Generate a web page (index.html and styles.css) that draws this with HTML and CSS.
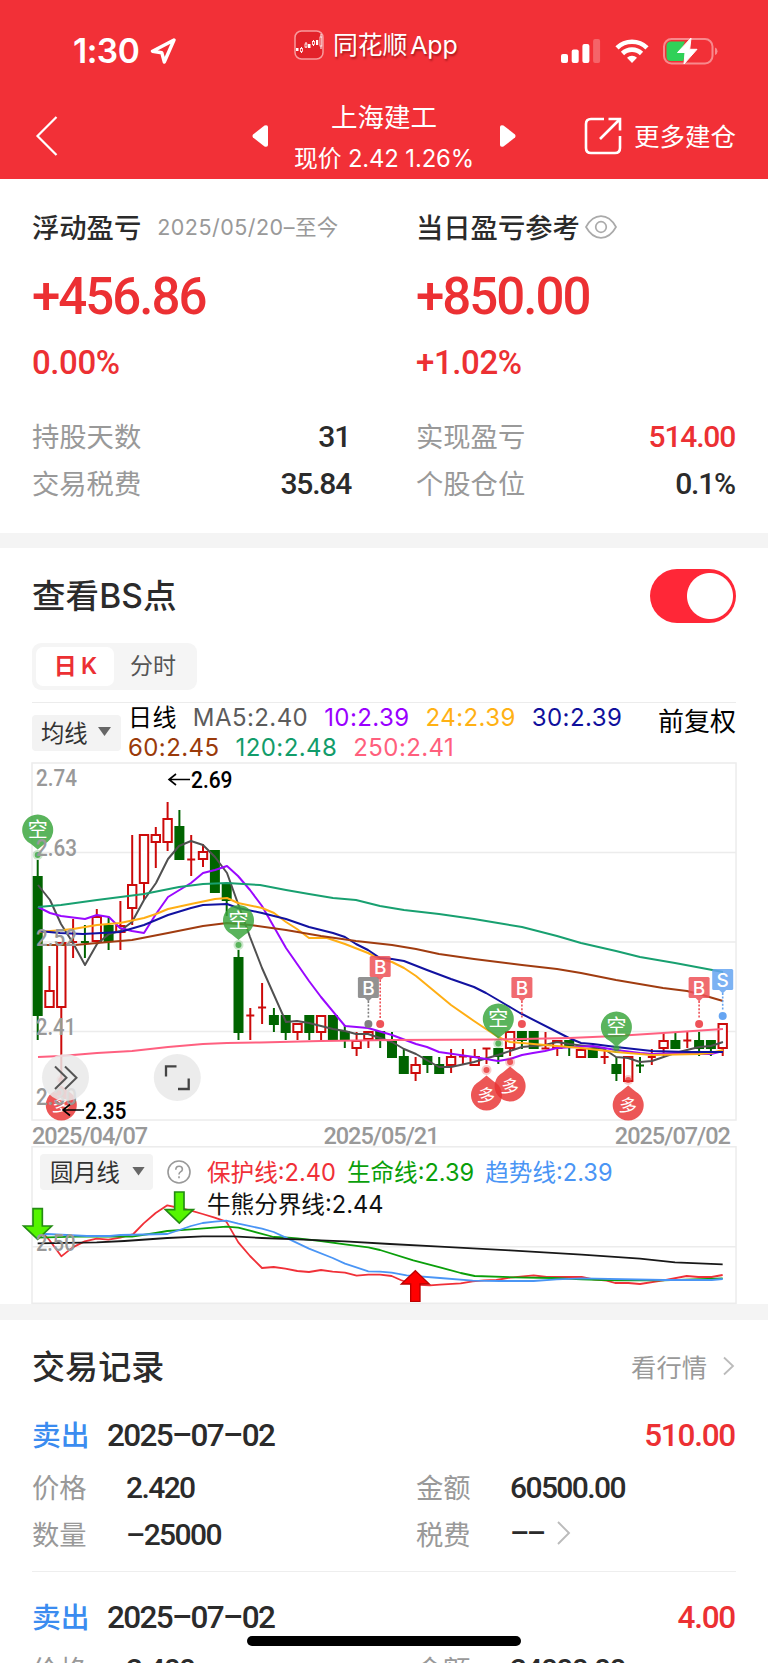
FILE: index.html
```html
<!DOCTYPE html>
<html lang="zh-CN">
<head>
<meta charset="utf-8">
<title>上海建工</title>
<link rel="stylesheet" href="styles.css">
</head>
<body>
<div class="app">
  <header class="top">
    <div class="status">
      <div class="clock"><span>1:30</span>
        <svg width="26" height="26" viewBox="0 0 26 26"><path d="M24 2 2.500 13.200l9.300 1.600L14.300 24z" fill="none" stroke="#fff" stroke-width="3.400" stroke-linejoin="round"/></svg>
      </div>
      <div class="island">
        <svg width="30" height="30" viewBox="0 0 30 30"><rect x="1" y="1" width="28" height="28" rx="6.500" fill="#e3222a" stroke="#f79a9d" stroke-width="1.500"/><g stroke="#fff" stroke-width="1" fill="none"><path d="M7.500 17v6M12 12v6M19.500 10v6M27 4v15"/></g><g fill="#fff"><rect x="2" y="18" width="2.500" height="3"/><rect x="14" y="14" width="2.500" height="4"/><rect x="22" y="10" width="2.200" height="5"/></g><g fill="#e3222a" stroke="#fff" stroke-width=".8"><rect x="6.500" y="18.500" width="2" height="3"/><rect x="11" y="14" width="2" height="3"/><rect x="18.500" y="11.500" width="2" height="3"/><rect x="26" y="7" width="1.800" height="9"/></g></svg>
        <span>同花顺 App</span>
      </div>
      <div class="signals">
        <svg width="40" height="26" viewBox="0 0 40 26" fill="#fff"><rect x="0" y="16" width="7" height="9" rx="2"/><rect x="10.700" y="11.500" width="7" height="13.500" rx="2"/><rect x="21.400" y="6" width="7" height="19" rx="2"/><rect x="32.100" y="1" width="7" height="24" rx="2" opacity=".25"/></svg>
        <svg width="34" height="26" viewBox="0 0 34 26" fill="none" stroke="#fff" stroke-width="4.600"><path d="M2 9.800a21.500 21.500 0 0 1 30 0"/><path d="M7.500 15.500a13.500 13.500 0 0 1 19 0"/><path d="M17 25l-5-5.200a7.200 7.200 0 0 1 10 0z" fill="#fff" stroke="none"/></svg>
        <svg width="56" height="28" viewBox="0 0 56 28"><rect x="1" y="2" width="48.500" height="24.500" rx="7.500" fill="none" stroke="#f8898d" stroke-width="2"/><path d="M52 10.500q2.500.8 2.500 3.700t-2.500 3.700z" fill="#f8898d"/><path d="M8 4.500h14L17 16h6l-3 8H8q-4.500 0-4.500-4.500V9Q3.500 4.500 8 4.500z" fill="#30d158"/><path d="M28 1 14.500 15.500h7.500L21 27 34 12.300h-7.300z" fill="#fff" stroke="#fff" stroke-width="1" stroke-linejoin="round"/></svg>
      </div>
    </div>
    <nav class="nav">
      <svg class="back" width="24" height="42" viewBox="0 0 24 42"><path d="M21.500 2 2.500 21l19 19" fill="none" stroke="#fff" stroke-width="2.200"/></svg>
      <div class="stock">
        <svg width="17" height="24" viewBox="0 0 17 24"><path d="M1 10.500 12.500 1.500Q16 .5 16 3v18q0 2.500-3.500 1.500L1 13.500Q0 12 1 10.500z" fill="#fff"/></svg>
        <div class="quote"><b>上海建工</b><span>现价 2.42 1.26%</span></div>
        <svg width="17" height="24" viewBox="0 0 17 24"><path d="M16 10.500 4.500 1.500Q1 .5 1 3v18q0 2.500 3.500 1.500L16 13.500q1-1.500 0-3z" fill="#fff"/></svg>
      </div>
      <div class="more">
        <svg width="38" height="38" viewBox="0 0 38 38" fill="none" stroke="#fff" stroke-width="2.600"><path d="M20 2H7Q2 2 2 7v24q0 5 5 5h24q5 0 5-5V19M24.500 2H36v11.500M35.500 2.500 16 22"/></svg>
        <span>更多建仓</span>
      </div>
    </nav>
  </header>

  <section class="summary">
    <div class="col">
      <h2>浮动盈亏<small>2025/05/20–至今</small></h2>
      <p class="big">+456.86</p>
      <p class="pct">0.00%</p>
      <div class="pair"><span>持股天数</span><b class="days">31</b></div>
      <div class="pair"><span>交易税费</span><b>35.84</b></div>
    </div>
    <div class="col">
      <h2>当日盈亏参考<svg width="32" height="24" viewBox="0 0 32 24" fill="none" stroke="#aaa" stroke-width="1.700"><path d="M1 12Q7 1.200 16 1.200T31 12Q25 22.800 16 22.800T1 12z"/><circle cx="16" cy="12" r="5.300"/></svg></h2>
      <p class="big">+850.00</p>
      <p class="pct">+1.02%</p>
      <div class="pair"><span>实现盈亏</span><b class="up">514.00</b></div>
      <div class="pair"><span>个股仓位</span><b>0.1%</b></div>
    </div>
  </section>

  <section class="bs">
    <div class="bs-head"><h1>查看BS点</h1><i class="switch"></i></div>
    <div class="tabs"><span class="on">日 K</span><span>分时</span></div>
    <div class="ma">
      <div class="select">均线<i></i></div>
      <div class="legend">
        <div><span class="k">日线</span><span class="m5">MA5:2.40</span><span class="m10">10:2.39</span><span class="m24">24:2.39</span><span class="m30">30:2.39</span></div>
        <div><span class="m60">60:2.45</span><span class="m120">120:2.48</span><span class="m250">250:2.41</span></div>
      </div>
      <span class="adjust">前复权</span>
    </div>
    <svg class="kline" viewBox="0 763 768 357" width="768" height="357">
      <g fill="none" stroke="#ececec" stroke-width="1.500"><rect x="32" y="763" width="704" height="357"/><path d="M32 852.500H736M32 942H736M32 1031.500H736"/></g>
      <g id="candles"></g>
      <g id="averages" fill="none" stroke-width="2" stroke-linejoin="round"></g>
      <g id="marks"></g>
      <g class="axis"><text x="36" y="786" textLength="41" lengthAdjust="spacingAndGlyphs">2.74</text><text x="36" y="856" textLength="41" lengthAdjust="spacingAndGlyphs">2.63</text><text x="36" y="945.500" textLength="41" lengthAdjust="spacingAndGlyphs">2.52</text><text x="36" y="1034.500" textLength="40" lengthAdjust="spacingAndGlyphs">2.41</text><text x="36" y="1105" textLength="41" lengthAdjust="spacingAndGlyphs">2.30</text></g>
      <g fill="#e9e9e9" fill-opacity=".85"><circle cx="65.500" cy="1077.500" r="23.500"/><circle cx="177.300" cy="1077.500" r="23.500"/></g>
      <path d="M55 1066.500 66.500 1077.800 55 1089M65 1066.500 76.500 1077.800 65 1089" fill="none" stroke="#555" stroke-width="2"/>
      <path d="M166 1076.500v-10.200h10.500M178 1089h10.700v-10.500" fill="none" stroke="#444" stroke-width="2.300"/>
      <path d="M190 779.500H169.500M176 774l-7 5.500 7 5.500M84 1110H63M70 1104.500 63 1110l7 5.500" fill="none" stroke="#000" stroke-width="1.600"/>
      <g class="peak"><text x="191" y="788" textLength="41.500" lengthAdjust="spacingAndGlyphs">2.69</text><text x="85" y="1118.500" textLength="41.500" lengthAdjust="spacingAndGlyphs">2.35</text></g>
    </svg>
    <div class="dates"><span>2025/04/07</span><span>2025/05/21</span><span>2025/07/02</span></div>
    <div class="sub">
      <div class="sub-head">
        <div class="select wide">圆月线<i></i></div>
        <svg class="help" width="24" height="24" viewBox="0 0 24 24" fill="none" stroke="#999" stroke-width="1.600"><circle cx="12" cy="12" r="11"/><path d="M8.800 9.800q0-3.600 3.300-3.600t3.300 3q0 1.600-1.900 2.700-1.500.9-1.500 2.700M12 16.300v2"/></svg>
        <div class="sub-legend"><div><span class="c1">保护线:2.40</span><span class="c2">生命线:2.39</span><span class="c3">趋势线:2.39</span></div><div>牛熊分界线:2.44</div></div>
      </div>
      <svg class="lines" viewBox="0 1147 768 156" width="768" height="156">
        <g fill="none" stroke="#ececec" stroke-width="1.500"><rect x="32" y="1146.800" width="704" height="156.500"/><path d="M32 1246.800H736"/></g>
        <g transform="translate(20 1140) scale(.33333)">
          <g fill="none" stroke-width="5.400" stroke-linejoin="round">
            <polyline stroke="#f03038" points="53,262 88,300 124,349 158,322 194,304 230,296 265,299 301,293 340,282 371,250 407,219 442,196 478,204 513,212 548,222 584,233 619,245 655,307 690,348 726,384 761,381 796,386 832,393 867,396 903,390 938,395 975,398 1010,407 1045,404 1080,404 1115,408 1142,420 1180,434 1230,436 1260,434 1322,430 1358,424 1393,421 1429,420 1470,413 1541,406 1580,411 1685,411 1720,418 1760,422 1785,429 1825,429 1860,432 1930,421 2000,408 2035,411 2075,411 2108,405"/>
            <polyline stroke="#0a9f0a" points="53,293 200,289 336,290 407,279 442,273 513,268 619,260 655,263 690,272 761,291 796,292 832,295 903,303 975,313 1045,322 1080,330 1180,361 1260,382 1322,399 1364,408 1480,412 1600,414 1685,418 1780,421 1930,421 2108,415"/>
            <polyline stroke="#4a95f5" points="53,283 80,282 200,288 270,288 301,285 442,282 478,270 513,258 548,249 584,245 619,242 655,251 726,266 761,276 796,292 867,326 938,354 975,371 1045,394 1080,395 1115,398 1160,406 1260,414 1358,422 1440,423 1541,423 1610,418 1685,415 1930,420 2075,420 2108,417"/>
            <polyline stroke="#181818" points="53,310 230,307 313,303 442,294 548,289 640,289 726,294 832,298 975,304 1110,312 1260,320 1470,331 1685,344 1860,356 1965,367 2108,373"/>
          </g>
          <path d="M39 206H67V258H95L53 298 11 258H39zM464 156H492V209H520L478 249 436 209H464z" fill="#55f500" stroke="#238c12" stroke-width="5"/>
          <path d="M1172 484H1200V432H1228L1186 392 1144 432H1172z" fill="#f00" stroke="#b00" stroke-width="4"/>
        </g>
        <text class="axis" x="36" y="1250.500" textLength="39.500" lengthAdjust="spacingAndGlyphs">2.50</text>
      </svg>
    </div>
  </section>

  <section class="records">
    <div class="rec-head"><h1>交易记录</h1><div class="link"><span>看行情</span><svg width="14" height="22" viewBox="0 0 14 22"><path d="M2 2.500l9 8.500-9 8.500" fill="none" stroke="#bbb" stroke-width="1.800"/></svg></div></div>
    <article class="rec">
      <div class="line"><em>卖出</em><time>2025–07–02</time><strong>510.00</strong></div>
      <div class="cells"><span>价格</span><b>2.420</b><span>金额</span><b>60500.00</b></div>
      <div class="cells"><span>数量</span><b>–25000</b><span>税费</span><b class="fee">––<svg width="16" height="26" viewBox="0 0 16 26"><path d="M2 2l11 11L2 24" fill="none" stroke="#bbb" stroke-width="1.900"/></svg></b></div>
    </article>
    <article class="rec">
      <div class="line"><em>卖出</em><time>2025–07–02</time><strong>4.00</strong></div>
      <div class="cells"><span>价格</span><b>2.400</b><span>金额</span><b>24000.00</b></div>
    </article>
  </section>
  <i class="home"></i>
</div>
<script src="chart.js"></script>
</body>
</html>
```
FILE: styles.css
```css
* { box-sizing: border-box; margin: 0; padding: 0; }
body { background: #fff; }
.app {
  position: relative;
  width: 768px;
  height: 1663px;
  overflow: hidden;
  background: #fff;
  color: #2b2b2b;
  font-family: Inter, "Noto Sans CJK SC", sans-serif;
  white-space: nowrap;
}
svg { display: block; flex: none; }
i, em { font-style: normal; }

.top { height: 179px; background: #f23037; color: #fff; }
.status { display: flex; height: 92px; padding: 0 49px 0 73px; }
.clock { display: flex; width: 221px; height: 102px; align-items: center; gap: 11px; font-size: 33.500px; font-weight: 600; letter-spacing: -.5px; }
.island { display: flex; width: 267px; height: 89px; align-items: center; gap: 9px; font-size: 24.900px; letter-spacing: -.1px; word-spacing: -4px; text-shadow: 1px 2px 2px rgba(80, 0, 0, .45); }
.island span { padding-bottom: 4px; }
.signals { display: flex; height: 102px; align-items: center; gap: 14px; }
.nav { display: flex; height: 87px; align-items: center; padding: 0 32px 0 35px; }
.stock { display: flex; width: 264px; margin-left: 193px; align-items: center; justify-content: space-between; }
.quote { display: flex; flex-direction: column; align-items: center; gap: 5px; font-family: "Noto Sans CJK SC", sans-serif; padding-top: 3px; }
.quote b { font-size: 26.500px; font-weight: 400; line-height: 38px; }
.quote span { font-size: 23.800px; line-height: 38px; font-family: Inter, "Noto Sans CJK SC", sans-serif; letter-spacing: -.1px; }
.more { display: flex; margin-left: auto; align-items: center; gap: 12px; font-size: 25.500px; }
.more span { padding-bottom: 3px; }

.summary { display: grid; grid-template-columns: 320px 320px; column-gap: 64px; height: 369px; padding: 24px 32px 0; border-bottom: 15px solid #f4f4f4; }
.summary h2 { display: flex; height: 48px; padding-bottom: 3px; align-items: center; font: 500 27.300px "Noto Sans CJK SC", sans-serif; }
.summary h2 small { margin-left: 16px; font: 400 21.500px Inter, "Noto Sans CJK SC", sans-serif; color: #999; letter-spacing: .48px; }
.summary h2 svg { margin: 2px 0 0 5px; }
.big, .pct, .pair b, .line time, .line strong, .cells b, .dates { font-family: Roboto, sans-serif; font-weight: 500; }
.big { height: 90px; font-size: 51px; line-height: 92px; letter-spacing: -2px; color: #ec3033; }
.pct { height: 44px; font-size: 33px; line-height: 44px; letter-spacing: -.4px; color: #ec3033; }
.pair { display: flex; height: 47px; align-items: center; justify-content: space-between; font: 400 27.300px "Noto Sans CJK SC", sans-serif; color: #999; }
.pair span { padding-bottom: 2px; }
.pct + .pair { margin-top: 27px; }
.pair b { margin-right: 1px; padding-top: 1px; font-size: 30px; letter-spacing: -1.200px; color: #2b2b2b; }
.pair b.up { color: #ec3033; }
.pair b.days { margin-right: 0; padding-right: 2px; }

.bs { height: 772px; border-bottom: 16px solid #f4f4f4; }
.bs-head { display: flex; height: 95px; padding: 0 32px; align-items: center; justify-content: space-between; }
h1 { font-size: 33.500px; font-weight: 500; line-height: 48px; letter-spacing: .1px; }
.switch { width: 86px; height: 54px; border-radius: 27px; background: radial-gradient(circle at 60px 27px, #fff 22.500px, #ff2737 23.500px); }
.tabs { display: flex; width: 165px; height: 47px; margin-left: 32px; padding: 4px; border-radius: 9px; background: #f5f5f5; font-size: 23px; line-height: 38px; color: #555; }
.tabs span { width: 78px; text-align: center; }
.tabs .on { border-radius: 7px; background: #fff; color: #ec3033; font-weight: 600; letter-spacing: -.8px; }
.ma { display: flex; height: 61px; margin: 12px 32px 0; border-top: 1px solid #ececec; }
.select { display: flex; width: 89px; height: 36px; margin-top: 12px; padding: 0 10px 3px 9px; align-items: center; justify-content: space-between; border-radius: 4px; background: #f3f3f3; font-size: 23.300px; color: #333; }
.select i { width: 13px; height: 9px; background: #666; clip-path: polygon(0 0, 100% 0, 50% 100%); }
.legend { margin-left: 7px; font-size: 24px; line-height: 29.500px; letter-spacing: .42px; }
.legend div { display: flex; gap: 16px; }
.k { color: #000; }
.m5 { color: #5c5c5c; } .m10 { color: #90f; } .m24 { color: #ffb114; } .m30 { color: #10109c; }
.m60 { color: #9a3a0a; } .m120 { color: #129c6a; } .m250 { color: #ff5f7d; }
.adjust { margin-left: auto; font-size: 26px; line-height: 38px; color: #000; }
.kline, .lines { overflow: visible; }
.kline { height: 357px; }
.axis, .peak { font: 500 24px Roboto, sans-serif; fill: #999; }
.peak { fill: #000; }
.bubble { font: 20px "Noto Sans CJK SC", sans-serif; fill: #fff; text-anchor: middle; }
.bubble.buy { font-size: 18px; }
.flag { font: 500 19px Inter, sans-serif; fill: #fff; text-anchor: middle; }
.dates { display: flex; height: 27px; padding: 0 38px 0 32px; justify-content: space-between; font-size: 23.500px; line-height: 33px; letter-spacing: -1px; color: #999; }
.sub { display: grid; height: 157px; }
.sub-head, .lines { grid-area: 1 / 1; }
.sub-head { display: flex; padding: 7px 0 0 40px; z-index: 1; height: 80px; }
.select.wide { width: 113px; margin-top: 0; padding: 0 8px 2px 10px; }
.help { margin: 6px 16px 0 14px; }
.sub-legend { font-size: 23.600px; line-height: 32px; margin-top: 3px; }
.sub-legend div { display: flex; gap: 11px; color: #111; }
.sub-legend .c1 { color: #f03038; } .sub-legend .c2 { color: #0a9f0a; } .sub-legend .c3 { color: #4a95f5; }

.records { padding: 0 32px; }
.rec-head { display: flex; height: 92px; align-items: center; justify-content: space-between; }
.rec-head h1 { padding-top: 2px; font-size: 33px; }
.link { display: flex; align-items: center; gap: 15px; font-size: 25.300px; color: #999; }
.rec { height: 181px; }
.rec + .rec { border-top: 1px solid #eee; padding-top: 22px; }
.rec:first-of-type { height: 159px; }
.line { display: flex; height: 46px; align-items: center; }
.line em { width: 75px; padding-bottom: 3px; font-size: 28.800px; font-weight: 500; color: #3b8cf0; }
.line time { font-size: 31.500px; letter-spacing: -1.650px; }
.line strong { margin-left: auto; margin-right: 1px; font-size: 31.500px; letter-spacing: -1.250px; color: #ec3033; }
.cells { display: grid; grid-template-columns: 94px 290px 94px 1fr; height: 47px; margin-top: 6px; align-items: center; font-size: 27.300px; color: #999; }
.cells span { padding-bottom: 4px; }
.cells + .cells { margin-top: 0; }
.cells b { display: flex; padding-bottom: 1px; align-items: center; gap: 14px; font-size: 30px; letter-spacing: -1.600px; color: #2b2b2b; }
.cells b.fee { gap: 12px; letter-spacing: -2.500px; padding-bottom: 4px; }
.home { position: absolute; left: 247px; top: 1636px; width: 274px; height: 10px; border-radius: 5px; background: #000; }
```
FILE: chart.js
```js
const X0 = 37.7, STEP = 11.81;
const RED = '#cc0a0a', GREEN = '#006400';
// [direction, wick top, body top, body bottom, wick bottom]
const candles = [
  ['g',860,876,1016,1040],['r',966,990,1008,1008],['r',942,942,1008,1080],['r',919,942,942,958],['g',925,942,942,958],
  ['r',909,916,942,942],['g',917,925,942,950],['r',901,925,933,950],['r',835,884,909,925],['r',834,834,884,900],
  ['r',827,834,843,868],['r',802,818,843,851],['g',810,826,860,860],['r',835,859.5,859.5,876],['r',844,851,860,867],
  ['g',850,850,893,893],['g',883,883,901,916],['g',950,957,1033,1040],['r',1008,1015.5,1015.5,1040],['r',983,1007.5,1007.5,1024],
  ['g',1008,1015,1025,1032],['g',1015,1015,1033,1040],['r',1023,1023,1033,1040],['g',1015,1015,1033,1040],['r',1015,1015,1033,1040],
  ['g',1015,1015,1040,1040],['g',1025,1031,1040,1048],['r',1032,1040,1049,1056],['r',1031,1031,1040,1048],['g',1031,1031,1040,1048],
  ['g',1032,1040,1058,1058],['g',1049,1056,1074,1074],['r',1057,1064,1074,1081],['g',1056,1056,1065,1073],['g',1057,1064,1074,1074],
  ['r',1049,1056,1066,1073],['r',1049,1056.5,1056.5,1064],['r',1049,1056,1066,1066],['r',1048.5,1048.5,1048.5,1064],['g',1048,1048,1057,1064],
  ['r',1031,1031,1049,1056],['g',1031,1031,1041,1049],['g',1031,1031,1049,1049],['r',1032,1048.5,1048.5,1048.5],['r',1040,1040,1049,1056],
  ['g',1040,1040,1048,1056],['r',1049,1049,1058,1058],['g',1048,1048,1058,1058],['r',1048,1057,1057,1064],['g',1057,1064,1074,1081],
  ['r',1056,1056,1082,1082],['g',1057,1065.5,1065.5,1073],['r',1049,1057,1057,1065],['r',1033,1040,1049,1056],['g',1033,1040,1049,1049],
  ['r',1032,1040.5,1040.5,1048],['g',1032,1040,1049,1056],['g',1040,1040,1049,1056],['r',1023,1023,1049,1056]
];
const averages = {
  '#505050': '38,885 50,900 61,924 73,943 85,965 97,944 109,934 120,931 132,922 144,900 156,883 168,859 179,846 191,841 203,845 215,857 227,873 250,937 262,968 286,1022 297,1021 309,1023 321,1026 333,1029 345,1031 356,1034 368,1034 380,1038 392,1042 404,1049 416,1054 439,1067 451,1067 474,1062 498,1055 522,1047 533,1046 545,1045 557,1042 569,1044 593,1047 604,1049 616,1057 628,1058 640,1062 652,1061 675,1053 699,1047 711,1046 723,1042',
  '#9a08ff': '38,907 50,913 61,916 85,919 97,915 109,917 120,928 132,931 144,933 156,914 168,897 191,883 203,873 215,870 227,866 238,876 250,890 262,906 286,948 309,981 321,997 345,1026 368,1028 392,1035 416,1044 427,1047 439,1052 474,1057 498,1061 510,1059 522,1055 533,1053 545,1051 557,1048 593,1046 616,1050 640,1053 652,1054 675,1053 699,1054 711,1054 723,1051',
  '#ffae14': '38,932 63,930 73,929 97,925 120,923 144,918 156,914 168,909 191,904 215,899 227,898 238,903 262,908 274,913 286,922 297,929 309,938 327,938 345,944 368,953 380,959 392,962 404,968 416,976 451,1005 474,1021 498,1037 510,1042 522,1043 545,1045 581,1048 616,1052 652,1055 699,1054 711,1053 723,1050',
  '#1212a0': '38,931 60,933 83,934 120,932 144,925 156,920 168,915 191,908 203,905 227,904 238,908 262,913 286,919 309,927 333,933 345,937 356,944 368,950 380,958 392,959 404,961 427,970 451,979 474,987 486,993 498,1000 520,1013 569,1038 581,1043 593,1044 616,1047 652,1051 687,1052 723,1052',
  '#a03c10': '38,945 75,945 97,943 132,940 168,933 203,926 227,923 250,925 286,930 321,936 356,941 392,945 416,949 439,954 474,959 498,962 522,965 557,969 581,973 616,980 663,988 687,991 699,994 723,1001',
  '#18a070': '38,907 61,905 97,900 144,894 179,887 203,884 227,883 260,885 286,890 309,894 333,898 356,900 380,906 404,910 439,914 474,919 498,923 522,927 557,936 581,943 616,951 640,957 675,963 723,972',
  '#ff6080': '38,1057 61,1056 97,1053 132,1051 168,1047 203,1044 227,1043 260,1042.5 321,1041 392,1040 498,1039.5 522,1039 569,1038 616,1036 663,1033 723,1029'
};
const at = i => +(X0 + STEP * i).toFixed(1);

document.getElementById('candles').innerHTML = candles.map(([kind, hi, top, bottom, lo], i) => {
  const x = at(i), color = kind === 'g' ? GREEN : RED;
  let out = '';
  if (hi < top) out += `<path d="M${x} ${hi}V${top}"/>`;
  if (lo > bottom) out += `<path d="M${x} ${bottom}V${lo}"/>`;
  if (top === bottom) out += `<path d="M${x - 4} ${top}h8"/>`;
  else if (kind === 'g') out += `<rect x="${x - 5}" y="${top}" width="10" height="${bottom - top}" fill="${color}" stroke="none"/>`;
  else out += `<rect x="${x - 4.2}" y="${top + 1}" width="8.4" height="${bottom - top - 2}" fill="#fff"/>`;
  return `<g stroke="${color}" stroke-width="2" fill="none">${out}</g>`;
}).join('');

document.getElementById('averages').innerHTML =
  Object.entries(averages).map(([c, p]) => `<polyline stroke="${c}" points="${p}"/>`).join('');

const dot = (x, y, c, halo) =>
  (halo ? `<circle cx="${x}" cy="${y}" r="5" fill="${c}" opacity=".3"/>` : '') +
  `<circle cx="${x}" cy="${y}" r="${halo ? 3 : 4}" fill="${c}"/>`;
const bubble = (i, y, dotY, label) => {
  const x = at(i), up = label === '多', c = up ? '#e93434' : '#39a53c', s = up ? -1 : 1;
  return `<g opacity=".83">${dot(x, dotY, c, true)}<path fill="${c}" d="M${x - 7} ${y + 13.8 * s}A15.5 15.5 0 1 ${up ? 0 : 1} ${x + 7} ${y + 13.8 * s}L${x} ${y + 19.5 * s}z"/></g>` +
    `<text class="bubble${up ? ' buy' : ''}" x="${x}" y="${y + 7}"${up ? ` transform="rotate(8 ${x} ${y})"` : ''}>${label}</text>`;
};
const flag = (i, top, dotY, label, c) => {
  const x = at(i);
  return `<path d="M${x} ${top + 24}V${dotY - 5}" stroke="${c}" stroke-width="1.6" stroke-dasharray="2 1.6"/>${dot(x, dotY, c)}` +
    `<g opacity=".85"><rect x="${x - 10.5}" y="${top}" width="21" height="21" rx="1.5" fill="${c}"/><path d="M${x - 3.5} ${top + 21}h7l-3.5 3.5z" fill="${c}"/></g>` +
    `<text class="flag" x="${x}" y="${top + 17.5}">${label}</text>`;
};
document.getElementById('marks').innerHTML =
  bubble(0, 830, 855, '空') + bubble(17, 920.5, 945, '空') + bubble(39, 1019, 1043.5, '空') + bubble(49, 1027, 1048, '空') +
  bubble(2, 1105, 1080, '多') + bubble(38, 1095, 1070, '多') + bubble(40, 1086, 1062, '多') + bubble(50, 1105, 1080, '多') +
  flag(28, 977, 1024, 'B', '#808080') + flag(29, 956, 1024, 'B', '#ee5258') + flag(41, 977, 1024, 'B', '#ee5258') +
  flag(56, 977, 1024, 'B', '#ee5258') + flag(58, 969, 1016, 'S', '#66a5f2');
```
